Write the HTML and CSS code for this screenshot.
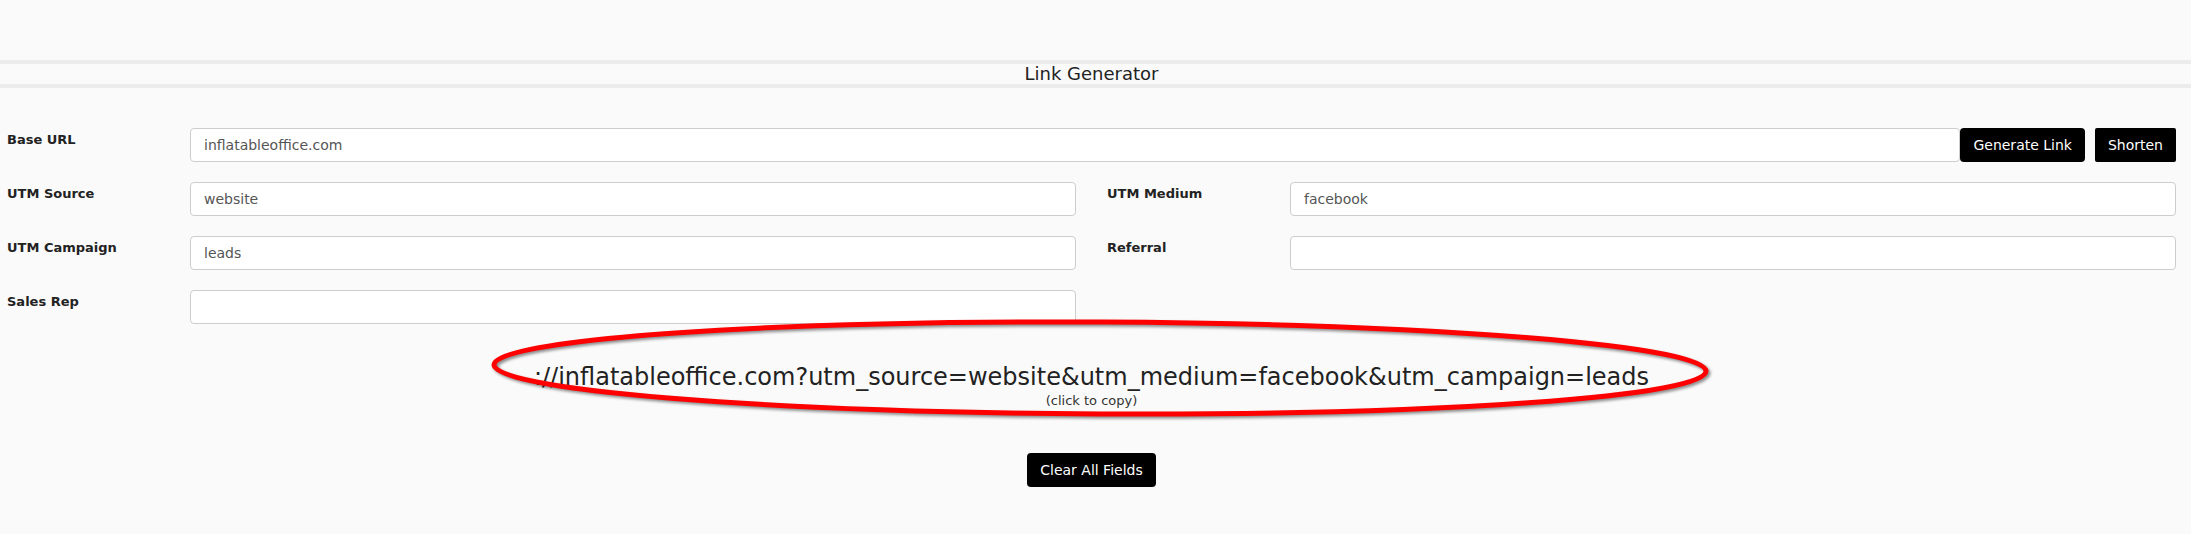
FILE: index.html
```html
<!DOCTYPE html>
<html lang="en">
<head>
    <meta charset="UTF-8">
    <meta name="viewport" content="width=device-width, initial-scale=1.0">
    <title>Link Generator</title>
    <link rel="stylesheet" href="styles.css">
</head>
<body>
    <div class="top-space"></div>

    <div class="title-bar">
        <h1 class="title">Link Generator</h1>
    </div>

    <div class="form">
        <div class="row">
            <div class="field field-wide">
                <label class="field-label">Base URL</label>
                <input class="field-input" type="text" value="inflatableoffice.com">
                <button class="btn btn-generate">Generate Link</button>
                <button class="btn btn-shorten">Shorten</button>
            </div>
        </div>

        <div class="row">
            <div class="field">
                <label class="field-label">UTM Source</label>
                <input class="field-input" type="text" value="website">
            </div>
            <div class="field">
                <label class="field-label">UTM Medium</label>
                <input class="field-input" type="text" value="facebook">
            </div>
        </div>

        <div class="row">
            <div class="field">
                <label class="field-label">UTM Campaign</label>
                <input class="field-input" type="text" value="leads">
            </div>
            <div class="field">
                <label class="field-label">Referral</label>
                <input class="field-input" type="text" value="">
            </div>
        </div>

        <div class="row">
            <div class="field">
                <label class="field-label">Sales Rep</label>
                <input class="field-input" type="text" value="">
            </div>
            <div class="field"></div>
        </div>

        <div class="result">
            <!-- red circle drawn round the link -->
            <svg class="circle" width="1250" height="120" viewBox="0 0 1250 120">
                <ellipse cx="620" cy="58" rx="606" ry="46" transform="rotate(0.3 620 58)"
                    fill="none" stroke="#ff0000" stroke-width="5"/>
            </svg>
            <p class="result-link">://inflatableoffice.com?utm_source=website&amp;utm_medium=facebook&amp;utm_campaign=leads</p>
            <p class="result-hint">(click to copy)</p>
        </div>

        <div class="actions">
            <button class="btn btn-clear">Clear All Fields</button>
        </div>
    </div>
</body>
</html>
```

FILE: styles.css
```css
body {
    margin: 0;
    background: #fafafa;
    font-family: "DejaVu Sans", "Noto Sans", sans-serif;
    color: #222;
}

.top-space {
    height: 60px;
}

.title-bar {
    border-top: 4px solid #ececec;
    border-bottom: 4px solid #ececec;
    padding: 0 15px 0 7px;
}

.title {
    margin: 0;
    height: 20px;
    line-height: 20px;
    font-size: 18px;
    font-weight: 400;
    text-align: center;
    color: #222;
}

.form {
    padding: 40px 15px 0 7px;
}

.row {
    display: flex;
    gap: 31px;
    margin-bottom: 20px;
}

.field {
    flex: 1;
    display: flex;
    align-items: flex-start;
}

.field-label {
    width: 183px;
    flex-shrink: 0;
    padding-top: 4px;
    font-size: 13px;
    font-weight: 700;
    color: #222;
}

.field-input {
    flex: 1;
    min-width: 0;
    height: 34px;
    box-sizing: border-box;
    padding: 0 13px;
    border: 1px solid #cdcdcd;
    border-radius: 4px;
    background: #fff;
    font-family: "DejaVu Sans", "Noto Sans", sans-serif;
    font-size: 14px;
    color: #555;
}

.btn {
    height: 34px;
    padding: 0 13px;
    border: none;
    border-radius: 4px;
    background: #000;
    color: #fff;
    font-family: "DejaVu Sans", "Noto Sans", sans-serif;
    font-size: 14px;
    cursor: pointer;
}

.btn-shorten {
    margin-left: 10px;
    border-radius: 2px;
}

.result {
    position: relative;
    margin-top: 39px;
    text-align: center;
}

.circle {
    position: absolute;
    left: 473px;
    top: -53px;
    filter: drop-shadow(2px 2px 1.5px rgba(0, 0, 0, 0.45));
    pointer-events: none;
}

.result-link {
    margin: 0;
    font-size: 24px;
    line-height: 28px;
    color: #222;
}

.result-hint {
    margin: 2px 0 0;
    font-size: 13px;
    line-height: 16px;
    color: #333;
}

.actions {
    margin-top: 44px;
    text-align: center;
}
```
